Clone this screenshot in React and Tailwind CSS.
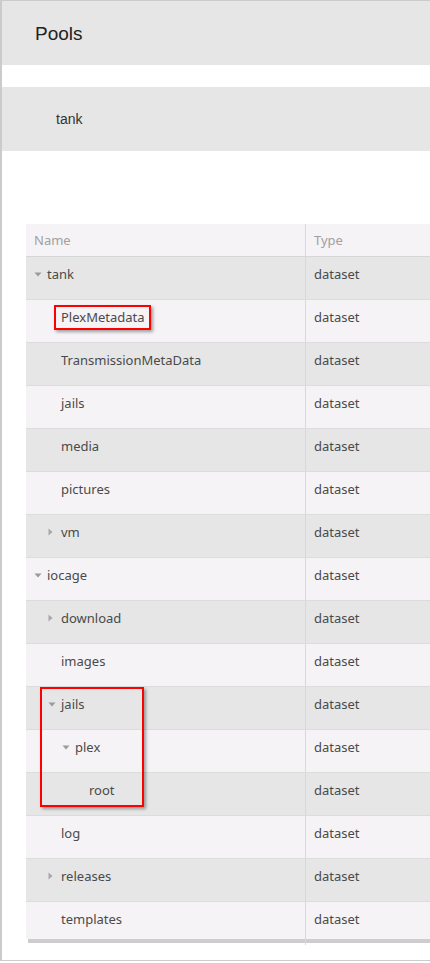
import React from "react";

const rows = [
  { name: "tank", level: 0, tri: "down" },
  { name: "PlexMetadata", level: 1 },
  { name: "TransmissionMetaData", level: 1 },
  { name: "jails", level: 1 },
  { name: "media", level: 1 },
  { name: "pictures", level: 1 },
  { name: "vm", level: 1, tri: "right" },
  { name: "iocage", level: 0, tri: "down" },
  { name: "download", level: 1, tri: "right" },
  { name: "images", level: 1 },
  { name: "jails", level: 1, tri: "down" },
  { name: "plex", level: 2, tri: "down" },
  { name: "root", level: 3 },
  { name: "log", level: 1 },
  { name: "releases", level: 1, tri: "right" },
  { name: "templates", level: 1, last: true },
];

function Tri({ dir }) {
  if (dir === "down") {
    return (
      <svg width="8" height="5" viewBox="0 0 8 5" className="block">
        <path d="M0.5 0.5 L7.5 0.5 L4 4.5 Z" fill="#9a9a9a" />
      </svg>
    );
  }
  return (
    <svg width="5" height="8" viewBox="0 0 5 8" className="block">
      <path d="M0.5 0.5 L4.5 4 L0.5 7.5 Z" fill="#a8a8a8" />
    </svg>
  );
}

const pad = ["pl-[8px]", "pl-[22px]", "pl-[36px]", "pl-[50px]"];

export default function App() {
  const font = { fontFamily: '"Noto Sans", "Open Sans", sans-serif' };
  return (
    <div className="relative w-[430px] h-[963px] bg-white">
      <div className="h-[961px] border-l-2 border-t border-b border-[#cbcbcb] flex flex-col">
        <div className="h-[64px] bg-[#e6e6e6] flex items-center pl-[33px] pt-[2px]">
          <span className="text-[19px] text-[#222]" style={{ fontFamily: '"Liberation Sans", Arial, sans-serif' }}>
            Pools
          </span>
        </div>
        <div className="h-[22px]" />
        <div className="h-[64px] bg-[#e6e6e6] flex items-center pl-[54px]">
          <span className="text-[14px] text-[#333]" style={{ fontFamily: '"Liberation Sans", Arial, sans-serif' }}>
            tank
          </span>
        </div>
        <div className="h-[73px]" />
        <div className="ml-[24px] bg-[#f6f3f6]" style={font}>
          <div className="flex h-[33px] border-b border-[#d6d6d6] text-[13px] text-[#a0a0a0]">
            <div className="w-[280px] border-r border-[#dadada] pl-[8px] pt-[2px] flex items-center">Name</div>
            <div className="flex-1 pl-[8px] pt-[2px] flex items-center">Type</div>
          </div>
          {rows.map((r, i) => (
            <div
              key={i}
              className={
                "flex text-[13px] text-[#4a4a4a] " +
                (r.last ? "h-[37px] " : "h-[43px] border-b border-[#dcdcdc] ") +
                (i % 2 === 0 ? "bg-[#e6e6e6]" : "bg-[#f6f3f6]")
              }
            >
              <div className={"w-[280px] border-r border-[#d8d8d8] flex items-start pt-[7px] " + pad[r.level]}>
                <span className="w-[13px] h-[20px] flex items-center">{r.tri ? <Tri dir={r.tri} /> : null}</span>
                <span className="leading-[20px]">{r.name}</span>
              </div>
              <div className="flex-1 pl-[8px] pt-[7px] leading-[20px]">dataset</div>
            </div>
          ))}
          <div className="flex h-[6px] bg-white">
            <div className="w-[280px] border-r border-[#d8d8d8] flex flex-col">
              <div className="h-[4px] ml-[2px] bg-[#cdcdcd]" />
            </div>
            <div className="flex-1 flex flex-col">
              <div className="h-[4px] bg-[#cdcdcd]" />
            </div>
          </div>
        </div>
      </div>
      <div className="absolute left-[54px] top-[305px] w-[97px] h-[25px] border-2 border-[#ff0000] shadow-[2px_2px_3px_rgba(0,0,0,0.35)]" />
      <div className="absolute left-[40px] top-[687px] w-[104px] h-[120px] border-2 border-[#ff0000] shadow-[2px_2px_3px_rgba(0,0,0,0.35)]" />
    </div>
  );
}
